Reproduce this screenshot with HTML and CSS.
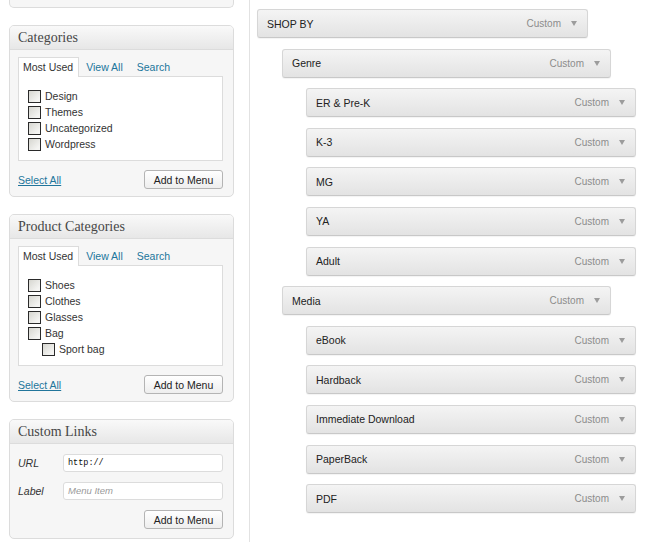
FILE: index.html
```html
<!DOCTYPE html>
<html>
<head>
<meta charset="utf-8">
<link rel="stylesheet" href="styles.css">
</head>
<body>
<div class="page">
  <aside class="sidebar">
    <div class="panel panel-cut">
      <div class="panel-foot foot-cut"><span></span><span class="btn btn-cut"></span></div>
    </div>

    <div class="panel">
      <h3 class="panel-title">Categories</h3>
      <div class="panel-body">
        <ul class="tabs">
          <li class="tab active">Most Used</li>
          <li class="tab">View All</li>
          <li class="tab">Search</li>
        </ul>
        <div class="tab-box">
          <label class="check"><span class="cb"></span>Design</label>
          <label class="check"><span class="cb"></span>Themes</label>
          <label class="check"><span class="cb"></span>Uncategorized</label>
          <label class="check"><span class="cb"></span>Wordpress</label>
        </div>
        <div class="panel-foot"><a class="select-all" href="#">Select All</a><button class="btn">Add to Menu</button></div>
      </div>
    </div>

    <div class="panel">
      <h3 class="panel-title">Product Categories</h3>
      <div class="panel-body">
        <ul class="tabs">
          <li class="tab active">Most Used</li>
          <li class="tab">View All</li>
          <li class="tab">Search</li>
        </ul>
        <div class="tab-box">
          <label class="check"><span class="cb"></span>Shoes</label>
          <label class="check"><span class="cb"></span>Clothes</label>
          <label class="check"><span class="cb"></span>Glasses</label>
          <label class="check"><span class="cb"></span>Bag</label>
          <label class="check child"><span class="cb"></span>Sport bag</label>
        </div>
        <div class="panel-foot"><a class="select-all" href="#">Select All</a><button class="btn">Add to Menu</button></div>
      </div>
    </div>

    <div class="panel">
      <h3 class="panel-title">Custom Links</h3>
      <div class="panel-body links-body">
        <div class="field"><span class="field-label">URL</span><span class="input mono">http://</span></div>
        <div class="field"><span class="field-label">Label</span><span class="input placeholder">Menu Item</span></div>
        <div class="panel-foot links-foot"><span></span><button class="btn">Add to Menu</button></div>
      </div>
    </div>
  </aside>

  <main class="menu">
    <div class="item d0"><span class="item-title">SHOP BY</span><span class="item-type">Custom<i class="arrow"></i></span></div>
    <div class="item d1"><span class="item-title">Genre</span><span class="item-type">Custom<i class="arrow"></i></span></div>
    <div class="item d2"><span class="item-title">ER &amp; Pre-K</span><span class="item-type">Custom<i class="arrow"></i></span></div>
    <div class="item d2"><span class="item-title">K-3</span><span class="item-type">Custom<i class="arrow"></i></span></div>
    <div class="item d2"><span class="item-title">MG</span><span class="item-type">Custom<i class="arrow"></i></span></div>
    <div class="item d2"><span class="item-title">YA</span><span class="item-type">Custom<i class="arrow"></i></span></div>
    <div class="item d2"><span class="item-title">Adult</span><span class="item-type">Custom<i class="arrow"></i></span></div>
    <div class="item d1"><span class="item-title">Media</span><span class="item-type">Custom<i class="arrow"></i></span></div>
    <div class="item d2"><span class="item-title">eBook</span><span class="item-type">Custom<i class="arrow"></i></span></div>
    <div class="item d2"><span class="item-title">Hardback</span><span class="item-type">Custom<i class="arrow"></i></span></div>
    <div class="item d2"><span class="item-title">Immediate Download</span><span class="item-type">Custom<i class="arrow"></i></span></div>
    <div class="item d2"><span class="item-title">PaperBack</span><span class="item-type">Custom<i class="arrow"></i></span></div>
    <div class="item d2"><span class="item-title">PDF</span><span class="item-type">Custom<i class="arrow"></i></span></div>
  </main>
</div>
</body>
</html>
```

FILE: styles.css
```css
* { box-sizing: border-box; }
html, body { margin: 0; padding: 0; background: #fff; }
body {
  font-family: "Liberation Sans", Arial, sans-serif;
  font-size: 10.5px;
  color: #333;
  width: 652px;
  height: 542px;
  overflow: hidden;
}
.page { display: flex; height: 542px; }

.sidebar {
  width: 249px;
  flex: none;
  padding: 0 15px 0 9px;
}
.panel {
  border: 1px solid #dcdcdc;
  border-radius: 5px;
  background: #f6f6f6;
  margin-bottom: 17px;
  overflow: hidden;
}
.panel-cut {
  margin-top: -19px;
  border-top: none;
}
.panel-title {
  margin: 0;
  height: 24px;
  padding: 0 8px;
  font-family: "Liberation Serif", Georgia, serif;
  font-weight: normal;
  font-size: 14px;
  line-height: 23px;
  color: #464646;
  background: linear-gradient(#f9f9f9, #e7e7e7);
  border-bottom: 1px solid #dcdcdc;
}
.panel-body { padding: 7px 10px 0 8px; }

.tabs {
  list-style: none;
  margin: 0;
  padding: 0;
  display: flex;
  height: 19px;
}
.tab {
  height: 19px;
  line-height: 18px;
  padding: 0 6px;
  border: 1px solid transparent;
  border-bottom: none;
  color: #21759b;
}
.tab.active {
  position: relative;
  z-index: 1;
  height: 20px;
  padding: 0 5px 0 4px;
  background: #fff;
  border-color: #dcdcdc;
  color: #333;
}
.tab-box {
  background: #fff;
  border: 1px solid #dcdcdc;
  padding: 11px 9px 8px;
}
.check {
  display: flex;
  align-items: center;
  height: 16px;
  gap: 4px;
}
.check.child { padding-left: 14px; }
.cb {
  width: 13px;
  height: 13px;
  border: 1px solid #2a2a2a;
  background: linear-gradient(135deg, #d6d6d0, #f4f4f2 80%);
  flex: none;
}

.panel-foot {
  display: flex;
  justify-content: space-between;
  align-items: center;
  margin-top: 9px;
  padding-bottom: 7px;
}
.foot-cut { margin: 0; padding: 0 10px 7px 8px; }
.select-all {
  color: #21759b;
  text-decoration: underline;
}
.btn {
  height: 19px;
  width: 79px;
  padding: 0;
  font-family: "Liberation Sans", Arial, sans-serif;
  font-size: 10.5px;
  color: #222;
  border: 1px solid #b4b4b4;
  border-radius: 3px;
  background: linear-gradient(#ffffff, #eeeeee);
}
.btn-cut { display: block; }

.links-body { padding-top: 10px; }
.field {
  display: flex;
  align-items: center;
  height: 18px;
  margin-bottom: 10px;
}
.field-label {
  width: 45px;
  font-style: italic;
  color: #333;
}
.input {
  flex: 1;
  height: 18px;
  line-height: 16px;
  padding: 0 4px;
  background: #fff;
  border: 1px solid #dcdcdc;
  border-radius: 3px;
}
.mono { font-family: "Liberation Mono", monospace; font-size: 8.5px; color: #111; }
.placeholder { font-style: italic; font-size: 9.5px; color: #9a9a9a; }
.links-foot { margin-top: 1px; padding-bottom: 9px; }

.menu {
  flex: 1;
  border-left: 1px solid #e2e2e2;
  padding: 9px 0 0 7px;
}
.item {
  width: 331px;
  height: 29px;
  margin-bottom: 10.6px;
  display: flex;
  align-items: center;
  justify-content: space-between;
  padding: 0 10px 0 9px;
  border: 1px solid #d6d6d6;
  border-bottom-color: #c8c8c8;
  border-radius: 3px;
  background: linear-gradient(#f4f4f4, #e3e3e3);
  box-shadow: 0 1px 1px rgba(0,0,0,0.05);
}
.d1 { margin-left: 25px; width: 329px; }
.d2 { margin-left: 49px; width: 330px; }
.item-title { color: #222; }
.item-type {
  display: flex;
  align-items: center;
  color: #8c8c8c;
  font-size: 10px;
}
.arrow {
  display: block;
  width: 0;
  height: 0;
  margin-left: 10px;
  border-left: 3px solid transparent;
  border-right: 3px solid transparent;
  border-top: 5px solid #9c9c9c;
}
```
